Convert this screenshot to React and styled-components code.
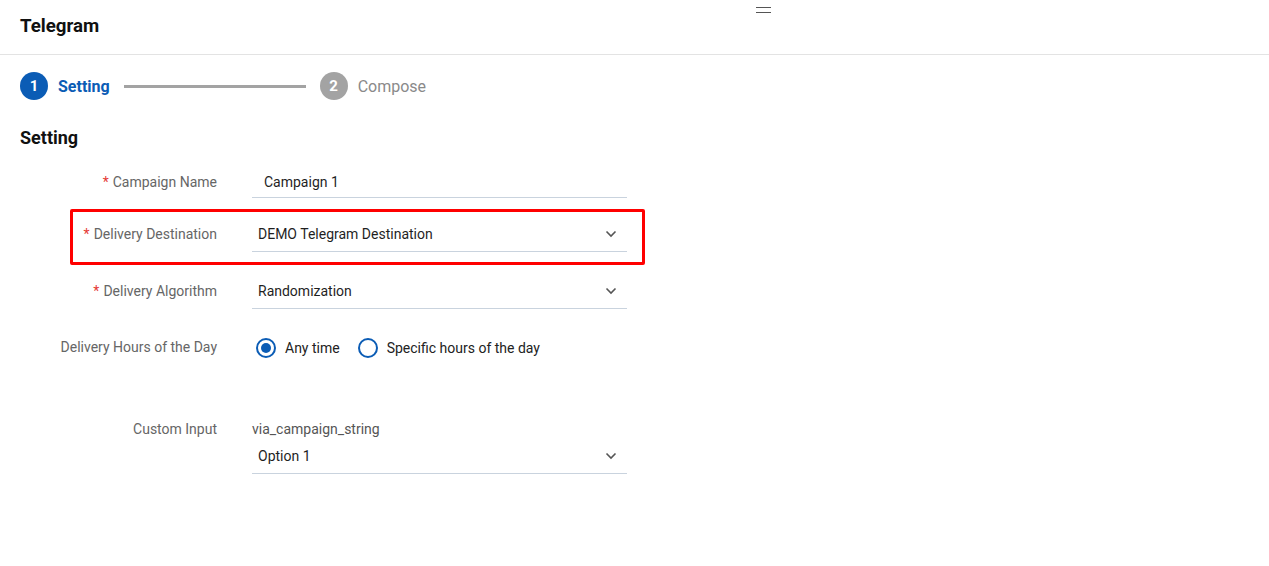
import React from "react";
import styled, { createGlobalStyle } from "styled-components";

const Global = createGlobalStyle`
  body {
    margin: 0;
    background: #fff;
    font-family: Roboto, "Liberation Sans", sans-serif;
  }
`;

function Chevron() {
  return (
    <svg width="12" height="8" viewBox="0 0 12 8">
      <path d="M1.5 1.5 L6 6 L10.5 1.5" fill="none" stroke="#555" strokeWidth="1.6" />
    </svg>
  );
}

export default function App() {
  return (
    <Page>
      <Global />
      <Handle />
      <Header>Telegram</Header>
      <Stepper>
        <Step>
          <StepDot $active>1</StepDot>
          <StepLabel $active>Setting</StepLabel>
        </Step>
        <StepLine />
        <Step>
          <StepDot>2</StepDot>
          <StepLabel>Compose</StepLabel>
        </Step>
      </Stepper>
      <Heading>Setting</Heading>
      <Form>
        <Row $mt={16}>
          <Label $h={32}>
            <Req>*</Req>Campaign Name
          </Label>
          <Field $h={32} $pl={12}>
            Campaign 1
          </Field>
        </Row>
        <Row $mt={18} $highlight>
          <Label $h={36}>
            <Req>*</Req>Delivery Destination
          </Label>
          <Field $h={36}>
            DEMO Telegram Destination
            <Chevron />
          </Field>
        </Row>
        <Row $mt={21}>
          <Label $h={36}>
            <Req>*</Req>Delivery Algorithm
          </Label>
          <Field $h={36}>
            Randomization
            <Chevron />
          </Field>
        </Row>
        <Row $mt={27}>
          <Label $h={22}>Delivery Hours of the Day</Label>
          <Radios>
            <Radio>
              <RadioMark $checked />
              Any time
            </Radio>
            <Radio>
              <RadioMark />
              Specific hours of the day
            </Radio>
          </Radios>
        </Row>
        <Row $mt={62}>
          <Label $h={18}>Custom Input</Label>
          <Stack>
            <Caption>via_campaign_string</Caption>
            <Field $h={36}>
              Option 1
              <Chevron />
            </Field>
          </Stack>
        </Row>
      </Form>
    </Page>
  );
}

const Page = styled.div`
  position: relative;
  width: 1269px;
  height: 566px;
  background: #fff;
`;

const Handle = styled.div`
  position: absolute;
  left: 756px;
  top: 7px;
  width: 15px;
  height: 6px;
  border-top: 1.5px solid #555;
  border-bottom: 1.5px solid #555;
  box-sizing: border-box;
`;

const Header = styled.div`
  height: 55px;
  display: flex;
  align-items: center;
  padding-left: 20px;
  padding-bottom: 2px;
  box-sizing: border-box;
  border-bottom: 1px solid #e3e3e3;
  font-size: 18.7px;
  font-weight: 700;
  color: #111;
`;

const Stepper = styled.div`
  display: flex;
  align-items: center;
  padding: 17px 20px 0;
`;

const Step = styled.div`
  display: flex;
  align-items: center;
  gap: 10px;
`;

const StepDot = styled.div`
  width: 28px;
  height: 28px;
  border-radius: 50%;
  background: ${({ $active }) => ($active ? "#0b5cb5" : "#a3a3a3")};
  color: #fff;
  font-size: 15px;
  font-weight: 700;
  display: flex;
  align-items: center;
  justify-content: center;
`;

const StepLabel = styled.div`
  font-size: 16px;
  font-weight: ${({ $active }) => ($active ? 700 : 400)};
  color: ${({ $active }) => ($active ? "#0b5cb5" : "#8a8a8a")};
`;

const StepLine = styled.div`
  width: 182px;
  height: 3px;
  background: #a3a3a3;
  margin: 0 14px 0 14px;
`;

const Heading = styled.div`
  margin: 26px 0 0 20px;
  font-size: 18px;
  line-height: 24px;
  font-weight: 700;
  color: #111;
`;

const Form = styled.div`
  padding-left: 20px;
`;

const Row = styled.div`
  position: relative;
  display: flex;
  align-items: flex-start;
  gap: 35px;
  width: 607px;
  margin-top: ${({ $mt }) => $mt}px;
  ${({ $highlight }) =>
    $highlight &&
    `
    &::after {
      content: "";
      position: absolute;
      left: 50px;
      right: -18px;
      top: -7px;
      bottom: -13px;
      border: 3px solid #f00;
      border-radius: 2px;
      pointer-events: none;
    }
  `}
`;

const Label = styled.div`
  width: 197px;
  flex-shrink: 0;
  height: ${({ $h }) => $h}px;
  display: flex;
  align-items: center;
  justify-content: flex-end;
  font-size: 14px;
  color: #666;
  white-space: nowrap;
`;

const Req = styled.span`
  color: #e53935;
  margin-right: 4px;
`;

const Field = styled.div`
  flex: 1 0 auto;
  height: ${({ $h }) => $h}px;
  box-sizing: border-box;
  display: flex;
  align-items: center;
  justify-content: space-between;
  padding: 0 10px 0 ${({ $pl }) => $pl || 6}px;
  border-bottom: 1px solid #c9d3de;
  font-size: 14px;
  color: #1f1f1f;
`;

const Stack = styled.div`
  flex: 1;
  display: flex;
  flex-direction: column;
`;

const Caption = styled.div`
  font-size: 14px;
  line-height: 18px;
  color: #555;
`;

const Radios = styled.div`
  display: flex;
  align-items: center;
  gap: 18px;
  padding-left: 4px;
  margin-top: 2px;
`;

const Radio = styled.label`
  display: flex;
  align-items: center;
  gap: 9px;
  font-size: 14px;
  color: #222;
`;

const RadioMark = styled.span`
  width: 20px;
  height: 20px;
  box-sizing: border-box;
  border-radius: 50%;
  border: 2px solid #0b5cb5;
  display: flex;
  align-items: center;
  justify-content: center;
  &::after {
    content: "";
    width: 10px;
    height: 10px;
    border-radius: 50%;
    background: ${({ $checked }) => ($checked ? "#0b5cb5" : "transparent")};
  }
`;
